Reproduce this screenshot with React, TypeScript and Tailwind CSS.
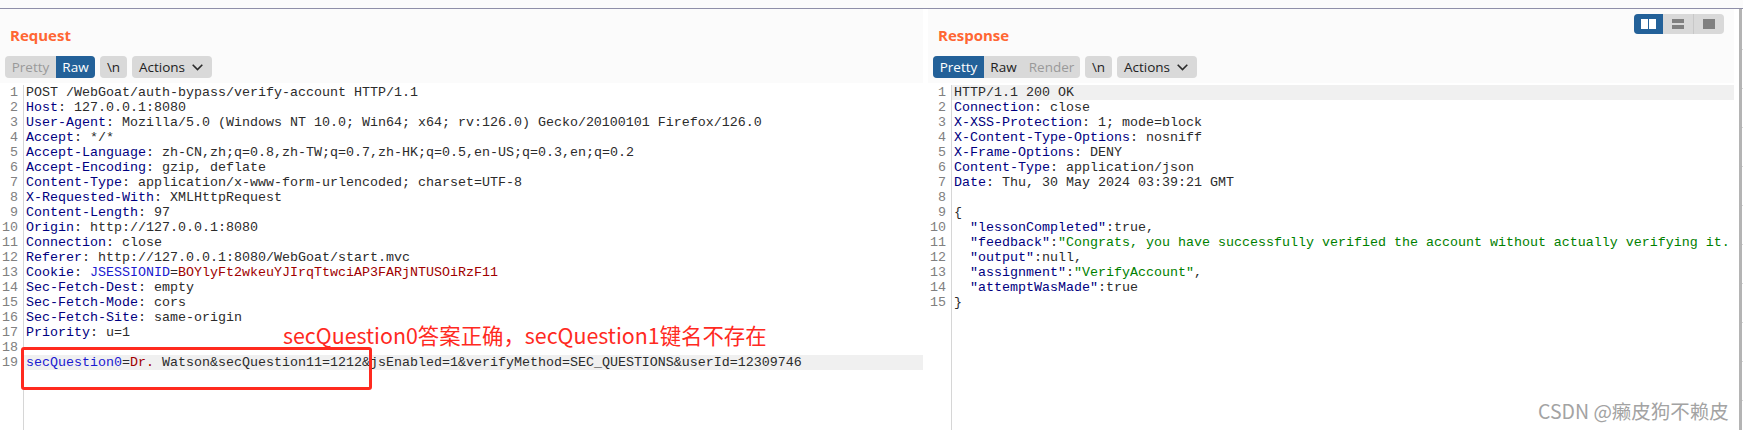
import React from 'react';

type Tone = 'key' | 'val' | 'blue' | 'red' | 'green';
type Seg = [string, Tone];

const tones: Record<Tone, string> = {
  key: 'text-[#000080]',
  val: 'text-[#2b2b2b]',
  blue: 'text-[#1a1ad0]',
  red: 'text-[#a00000]',
  green: 'text-[#008000]',
};

const header = (k: string, v: string): Seg[] => [[k, 'key'], [': ' + v, 'val']];

const requestLines: Seg[][] = [
  [['POST /WebGoat/auth-bypass/verify-account HTTP/1.1', 'val']],
  header('Host', '127.0.0.1:8080'),
  header('User-Agent', 'Mozilla/5.0 (Windows NT 10.0; Win64; x64; rv:126.0) Gecko/20100101 Firefox/126.0'),
  header('Accept', '*/*'),
  header('Accept-Language', 'zh-CN,zh;q=0.8,zh-TW;q=0.7,zh-HK;q=0.5,en-US;q=0.3,en;q=0.2'),
  header('Accept-Encoding', 'gzip, deflate'),
  header('Content-Type', 'application/x-www-form-urlencoded; charset=UTF-8'),
  header('X-Requested-With', 'XMLHttpRequest'),
  header('Content-Length', '97'),
  header('Origin', 'http://127.0.0.1:8080'),
  header('Connection', 'close'),
  header('Referer', 'http://127.0.0.1:8080/WebGoat/start.mvc'),
  [['Cookie', 'key'], [': ', 'val'], ['JSESSIONID', 'blue'], ['=', 'val'], ['BOYlyFt2wkeuYJIrqTtwciAP3FARjNTUSOiRzF11', 'red']],
  header('Sec-Fetch-Dest', 'empty'),
  header('Sec-Fetch-Mode', 'cors'),
  header('Sec-Fetch-Site', 'same-origin'),
  header('Priority', 'u=1'),
  [],
  [
    ['secQuestion0', 'blue'],
    ['=', 'val'],
    ['Dr.', 'red'],
    [' Watson&secQuestion11=1212&jsEnabled=1&verifyMethod=SEC_QUESTIONS&userId=12309746', 'val'],
  ],
];

const responseLines: Seg[][] = [
  [['HTTP/1.1 200 OK', 'val']],
  header('Connection', 'close'),
  header('X-XSS-Protection', '1; mode=block'),
  header('X-Content-Type-Options', 'nosniff'),
  header('X-Frame-Options', 'DENY'),
  header('Content-Type', 'application/json'),
  header('Date', 'Thu, 30 May 2024 03:39:21 GMT'),
  [],
  [['{', 'val']],
  [['  "lessonCompleted"', 'key'], [':true,', 'val']],
  // the pane cuts this line right after "it." in the picture
  [['  "feedback"', 'key'], [':', 'val'], ['"Congrats, you have successfully verified the account without actually verifying it.', 'green']],
  [['  "output"', 'key'], [':null,', 'val']],
  [['  "assignment"', 'key'], [':', 'val'], ['"VerifyAccount"', 'green'], [',', 'val']],
  [['  "attemptWasMade"', 'key'], [':true', 'val']],
  [['}', 'val']],
];

function Editor({ lines, active }: { lines: Seg[][]; active: number }) {
  return (
    <div className="flex flex-1 mt-[2px] min-h-0 font-['Liberation_Mono',monospace] text-[13.33px] leading-[15px]">
      <div className="w-[24px] shrink-0 border-r border-[#d6d6d6] pr-[5px] text-right text-[#808080]">
        {lines.map((_, i) => (
          <div key={i} className="h-[15px]">{i + 1}</div>
        ))}
      </div>
      <div className="flex-1 min-w-0 overflow-hidden">
        {lines.map((segs, i) => (
          <div key={i} className={`h-[15px] pl-[2px] whitespace-pre ${i === active ? 'bg-[#f0f0f0]' : ''}`}>
            {segs.map((s, j) => (
              <span key={j} className={tones[s[1]]}>{s[0]}</span>
            ))}
          </div>
        ))}
      </div>
    </div>
  );
}

function Chevron() {
  return (
    <svg width="11" height="7" viewBox="0 0 11 7" fill="none" stroke="#2b2b2b" strokeWidth="1.6" className="ml-[7px]">
      <path d="M0.7 0.8 5.5 5.6 10.3 0.8" />
    </svg>
  );
}

function Toolbar({ children }: { children: React.ReactNode }) {
  return (
    <div className="flex gap-[5px] pl-[5px] h-[22px] text-[13.5px] font-['Open_Sans',sans-serif] leading-[22px]">
      {children}
      <div className="w-[27px] rounded-[4px] bg-[#d9d9d9] text-center text-[#222]">\n</div>
      <div className="w-[80px] rounded-[4px] bg-[#d9d9d9] pl-[7px] flex items-center text-[#222]">
        Actions
        <Chevron />
      </div>
    </div>
  );
}

function Title({ text }: { text: string }) {
  return (
    <div className="h-[47px] pt-[15px] pl-[10px] text-[15px] leading-[22px] font-bold text-[#ff6633] font-['Open_Sans',sans-serif]">
      {text}
    </div>
  );
}

export default function App() {
  return (
    <div className="relative w-[1743px] h-[430px] overflow-hidden bg-white">
      <div className="h-[8px] bg-[#fbfbfb]" />
      <div className="h-px bg-[#8f8fa8]" />

      <div className="flex h-[421px]">
        <div className="flex flex-col w-[923px] mr-[5px]">
          <div className="h-[74px] bg-[#fbfbfb]">
            <Title text="Request" />
            <Toolbar>
              <div className="flex rounded-[4px] bg-[#d9d9d9] overflow-hidden">
                <div className="w-[51px] text-center text-[#999]">Pretty</div>
                <div className="w-[39px] text-center bg-[#236199] text-white">Raw</div>
              </div>
            </Toolbar>
          </div>
          <Editor lines={requestLines} active={18} />
        </div>

        <div className="flex flex-col w-[806px] mr-[5px]">
          <div className="h-[74px] bg-[#fbfbfb]">
            <Title text="Response" />
            <Toolbar>
              <div className="flex rounded-[4px] bg-[#d9d9d9] overflow-hidden">
                <div className="w-[51px] text-center bg-[#236199] text-white">Pretty</div>
                <div className="w-[39px] text-center text-[#222]">Raw</div>
                <div className="w-[57px] text-center text-[#999]">Render</div>
              </div>
            </Toolbar>
          </div>
          <Editor lines={responseLines} active={0} />
        </div>

        <div className="w-[3px] bg-[#b4b4b4]" />
        <div className="w-px pt-[40px] flex flex-col gap-[38px]">
          {Array.from({ length: 10 }).map((_, i) => (
            <div key={i} className="h-px bg-[#d8d8d8]" />
          ))}
        </div>
      </div>

      {/* layout toggle */}
      <div className="absolute left-[1634px] top-[14px] flex h-[20px] w-[90px] rounded-[4px] overflow-hidden bg-[#d9d9d9]">
        <div className="w-[29px] bg-[#236199] flex items-center justify-center gap-px">
          <div className="w-[7px] h-[10px] bg-white" />
          <div className="w-[7px] h-[10px] bg-white" />
        </div>
        <div className="w-[31px] border-r border-[#c8c8c8] flex flex-col items-center justify-center gap-[2px]">
          <div className="w-[12px] h-[4px] bg-[#808080]" />
          <div className="w-[12px] h-[4px] bg-[#808080]" />
        </div>
        <div className="flex-1 flex items-center justify-center">
          <div className="w-[12px] h-[10px] bg-[#808080]" />
        </div>
      </div>

      {/* red annotation on top of the screenshot */}
      <div className="absolute left-[21px] top-[347px] w-[351px] h-[43px] rounded-[3px] border-[3px] border-[#ff2a1f]" />
      <div className="absolute left-[283px] top-[320px] whitespace-nowrap text-[21.4px] leading-[30px] text-[#ff2a1f] font-['Noto_Sans_CJK_SC','Noto_Sans',sans-serif]">
        secQuestion0答案正确，secQuestion1键名不存在
      </div>

      {/* watermark */}
      <div className="absolute left-[1538px] top-[398px] whitespace-nowrap text-[19.5px] leading-[26px] text-[#a3a3a3] font-['Noto_Sans_CJK_SC',sans-serif]">
        CSDN @癞皮狗不赖皮
      </div>
    </div>
  );
}
